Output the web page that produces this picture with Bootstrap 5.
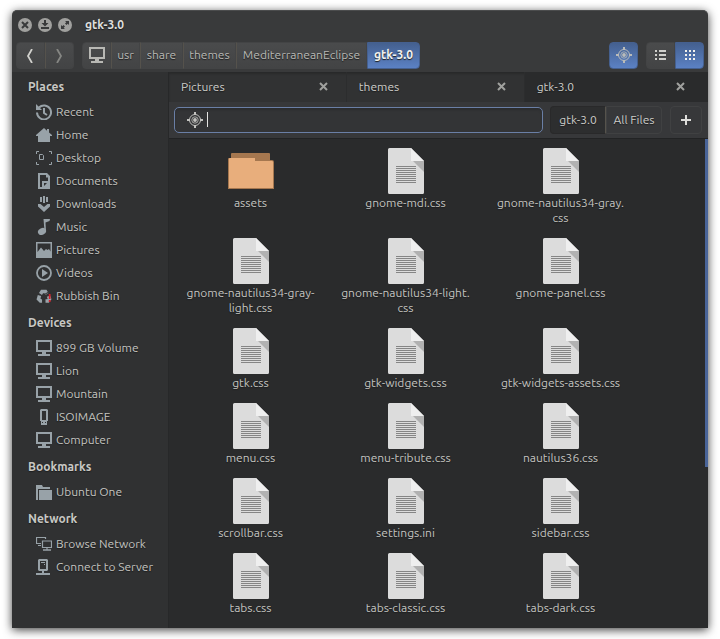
<!DOCTYPE html>
<html lang="en" data-bs-theme="dark">
<head>
<meta charset="utf-8">
<meta name="viewport" content="width=device-width, initial-scale=1">
<title>gtk-3.0</title>
<link href="https://cdn.jsdelivr.net/npm/bootstrap@5.3.0/dist/css/bootstrap.min.css" rel="stylesheet">
<style>
body{background:#fff;font-family:"Ubuntu","Noto Sans",sans-serif;font-size:12px;line-height:15px;color:#c4c4c0;padding:10px 12px 11px;text-shadow:0 1px 1px #1c1d1e}
a,a:hover{color:inherit;text-decoration:none}
button{font:inherit;color:inherit;text-shadow:inherit}
svg{display:block;flex:none}
.win{background:#393a3b;border-radius:5px 5px 0 0;box-shadow:0 2px 10px rgba(0,0,0,.75);min-height:calc(100vh - 21px);overflow:hidden;border-top:1px solid #4b4c4d}
.titlebar{height:27px;padding-left:6px;gap:6px}
.titlebar button{padding:0;border:0;background:none}
.titlebar h1{font-size:12px;font-weight:700;color:#dededc;margin:0 0 0 7px;line-height:16px}
.toolbar{height:34px;padding:4px}
.tool{height:27px;min-width:29px;padding:0 0 2px;border:1px solid #434445;border-left-color:#55524c;border-radius:0;background:linear-gradient(#4a4b4c,#434445);display:flex;align-items:center;justify-content:center;color:#b8b8b4}
.step{padding:0 2px 0 0}
.btn-set{display:flex}
.btn-set>:first-child{border-top-left-radius:4px;border-bottom-left-radius:4px;border-left-color:#434445}
.btn-set>:last-child{border-top-right-radius:4px;border-bottom-right-radius:4px}
.tool.picked{background:linear-gradient(#44608f,#5b81c4);border-color:#45608f;color:#f1f1ee}
.dim{color:#858683}
.side{width:157px;background:#303132;border-right:1px solid #272829}
.side h2{font-size:12px;font-weight:700;line-height:29px;margin:0;padding-left:16px;color:#c8c8c4}
.side a{height:23px;padding:0 0 2px 24px;gap:4px;display:flex;align-items:center}
.side svg{color:#98a2a8}
.main-pane{background:#2a2b2c;min-width:0}
.tabs-row{display:grid;grid-template-columns:33% 33% 1fr;background:#313233;height:30px;box-shadow:inset 0 2px 2px #292a2b}
.tab-cell{padding:0 18px 2px 12px;border-right:1px solid #2c2d2e;color:#cdcdc9}
.tab-cell.current{background:#2a2b2c;padding-right:23px;border:0}
.tab-cell button{background:none;border:0;padding:1px 0 0;color:#a0a19e}
.find{height:37px;background:#37383a;border-bottom:1px solid #222324;padding:0 6px 1px 5px}
.find-box input{width:100%;height:26px;border:1px solid #6a7fa6;border-radius:5px;background:#333436;color:inherit;padding:0 8px 0 34px;outline:0;display:block;box-shadow:inset 0 2px 2px #2c2d2f}
.find-box svg{position:absolute;left:13px;top:5px;color:#c2c2bf}
.caret{position:absolute;left:33px;top:5px;width:1px;height:15px;background:#e4e4e2}
.scopes{margin:0 8px 0 7px}
.scope{width:56px;height:28px;border:1px solid #404142;border-radius:0;background:#37383a;padding:0;color:#cdcdc9}
.scope.in{background:#2d2e2f;border-color:#29292a;border-right-color:#56534c}
.scope.plus{width:32px;border-radius:4px}
.files{position:relative}
.files ul{display:grid;grid-template-columns:repeat(auto-fill,155px);row-gap:13px;padding:9px 4px 13px 4px;margin:0;list-style:none}
.files a{display:flex;flex-direction:column;align-items:center;gap:1px;text-align:center}
.thumb{position:absolute;right:0;top:0;width:3px;height:67%;background:#4a6599}
.w-usr{width:29px}.w-share{width:43px}.w-themes{width:53px}.w-med{width:131px}.w-now{width:53px}
</style>
</head>
<body>
<svg width="0" height="0" class="position-absolute" aria-hidden="true">
<symbol id="pc" viewBox="0 0 16 16"><path fill="currentColor" fill-rule="evenodd" d="M0 0h16v12h-6v2h4v2H2v-2h4v-2H0zM2 2v8h12V2z"/></symbol>
<symbol id="target" viewBox="0 0 16 16"><g fill="none" stroke="currentColor"><circle cx="8" cy="8" r="5.5"/><circle cx="8" cy="8" r="3.2" stroke-width=".8"/><path stroke-width="2" d="M8 0v3M8 13v3M0 8h3M13 8h3"/></g><circle cx="8" cy="8" r="1.9" fill="currentColor"/></symbol>
<symbol id="x" viewBox="0 0 9 9"><path d="M1 1l7 7M8 1L1 8" stroke="currentColor" stroke-width="2"/></symbol>
<symbol id="doc" viewBox="0 0 36 46"><path fill="#dcdcdc" d="M1.500 0H23l13 13v31.500a1.500 1.500 0 0 1-1.500 1.500h-33A1.500 1.500 0 0 1 0 44.500v-43A1.500 1.500 0 0 1 1.500 0z"/><path fill="#b1b1b1" d="M25 13h11v11z"/><path fill="#efefef" d="M23 0l13 13H23z"/><path stroke="#858585" d="M8 18.500h20M8 20.500h20M8 22.500h20M8 24.500h20M8 26.500h20M8 28.500h20M8 30.500h20M8 32.500h20M8 34.500h20"/></symbol>
</svg>
<div class="win d-flex flex-column">
<header>
<div class="titlebar d-flex align-items-center">
<button type="button" aria-label="Close"><svg width="14" height="14" viewBox="0 0 14 14"><circle cx="7" cy="7" r="7" fill="#a0a09e"/><path d="M4 4l6 6M10 4l-6 6" stroke="#393a3b" stroke-width="2"/></svg></button>
<button type="button" aria-label="Minimise"><svg width="14" height="14" viewBox="0 0 14 14"><circle cx="7" cy="7" r="7" fill="#a0a09e"/><path fill="#393a3b" d="M6 2h2v3h2.500L7 8.500 3.500 5H6zM3 9h8v2H3z"/></svg></button>
<button type="button" aria-label="Maximise"><svg width="14" height="14" viewBox="0 0 14 14"><circle cx="7" cy="7" r="7" fill="#a0a09e"/><path fill="#393a3b" d="M7 3h4v4L9.700 5.700 8.500 7 7 5.500 8.300 4.300zM3 7l1.300 1.300L5.500 7 7 8.500 5.700 9.700 7 11H3z"/></svg></button>
<h1>gtk-3.0</h1>
</div>
<div class="toolbar d-flex">
<div class="btn-set me-2"><button class="tool step" type="button" aria-label="Back"><svg width="8" height="14" viewBox="0 0 8 14"><path d="M6 0L2 7l4 7" fill="none" stroke="#d0d0cc" stroke-width="1.800"/></svg></button><button class="tool step dim" type="button" aria-label="Forward"><svg width="8" height="14" viewBox="0 0 8 14"><path d="M2 0l4 7-4 7" fill="none" stroke="currentColor" stroke-width="1.800"/></svg></button></div>
<nav class="btn-set" aria-label="Path"><a href="#" class="tool" aria-label="Computer"><svg width="16" height="16"><use href="#pc"/></svg></a><a href="#" class="tool w-usr">usr</a><a href="#" class="tool w-share">share</a><a href="#" class="tool w-themes">themes</a><a href="#" class="tool w-med">MediterraneanEclipse</a><a href="#" class="tool picked w-now fw-bold">gtk-3.0</a></nav>
<div class="btn-set ms-auto me-2"><button class="tool picked" type="button" aria-label="Search"><svg width="16" height="16" color="#b9bbb9"><use href="#target"/></svg></button></div>
<div class="btn-set"><button class="tool" type="button" aria-label="List view"><svg width="11" height="10" viewBox="0 0 11 10"><path fill="#d0d0cc" d="M0 0h2v2H0zM4 0h7v2H4zM0 4h2v2H0zM4 4h7v2H4zM0 8h2v2H0zM4 8h7v2H4z"/></svg></button><button class="tool picked" type="button" aria-label="Icon view"><svg width="10" height="10" viewBox="0 0 10 10"><path fill="currentColor" d="M0 0h2v2H0zM4 0h2v2H4zM8 0h2v2H8zM0 4h2v2H0zM4 4h2v2H4zM8 4h2v2H8zM0 8h2v2H0zM4 8h2v2H4zM8 8h2v2H8z"/></svg></button></div>
</div>
</header>
<div class="d-flex flex-grow-1">
<aside class="side flex-shrink-0">
<h2>Places</h2>
<a href="#"><svg width="16" height="16" viewBox="0 0 16 16" fill="none" stroke="currentColor" stroke-width="2"><path d="M3 3.500A7 7 0 1 1 1 8.500"/><path d="M8 4v5l3 2"/><path d="M0 0l6 6H0z" fill="currentColor" stroke="none"/></svg>Recent</a>
<a href="#"><svg width="16" height="16" viewBox="0 0 16 16"><path fill="currentColor" d="M8 1l3 2.700V2h2v3.500L16 8v1h-2v6H2V9H0V8z"/></svg>Home</a>
<a href="#"><svg width="16" height="16" viewBox="0 0 16 16" fill="none" stroke="currentColor"><path d="M3 1.500H.5V4M13 1.500h2.500V4M.5 12v2.500H3M15.500 12v2.500H13M3.500 4.500h3l1 1v4h-4z"/></svg>Desktop</a>
<a href="#"><svg width="16" height="16" viewBox="0 0 16 16"><path fill="currentColor" fill-rule="evenodd" d="M2 0h9l3 3v13H2zM4 2v12h2V8h6V4.500h-2V2zM8 10v3l3-3z"/></svg>Documents</a>
<a href="#"><svg width="16" height="16" viewBox="0 0 16 16"><path fill="currentColor" d="M4 1h2v5H4zM7 0h2v7H7zM10 1h2v5h-2zM2 8h2.500L8 11l3.500-3H14v2.500L8 16l-6-5.500z"/></svg>Downloads</a>
<a href="#"><svg width="16" height="16" viewBox="0 0 16 16"><ellipse cx="6" cy="12.500" rx="4.200" ry="3.300" transform="rotate(-25 6 12.500)" fill="currentColor"/><path fill="currentColor" d="M7.500 0H14l-.5 2-4 1.500L10 12H8.500z"/></svg>Music</a>
<a href="#"><svg width="16" height="16" viewBox="0 0 16 16"><path fill="currentColor" fill-rule="evenodd" d="M0 0h16v16H0zM1.500 1.500V10L5 5.500 8 9l2-2 1.500 1L13 7l1.500 2.500v-8z"/></svg>Pictures</a>
<a href="#"><svg width="16" height="16" viewBox="0 0 16 16"><circle cx="8" cy="8" r="7" fill="none" stroke="currentColor" stroke-width="1.800"/><path fill="currentColor" d="M6 4l6 4-6 4z"/></svg>Videos</a>
<a href="#"><svg width="16" height="16" viewBox="0 0 16 16"><path fill="none" stroke="currentColor" stroke-width="3.500" d="M4.500 6L6 3.500h3.500L11 6M3.500 7.500L2.500 11l2 2H7M9.500 13H12l1.500-2-1-3" stroke-dasharray="8 1"/><path stroke="#d3202b" stroke-width="1.800" d="M13.700 6v5M13.700 12v2"/></svg>Rubbish Bin</a>
<h2>Devices</h2>
<a href="#"><svg width="16" height="16"><use href="#pc"/></svg>899 GB Volume</a>
<a href="#"><svg width="16" height="16"><use href="#pc"/></svg>Lion</a>
<a href="#"><svg width="16" height="16"><use href="#pc"/></svg>Mountain</a>
<a href="#"><svg width="16" height="16" viewBox="0 0 16 16"><path fill="currentColor" fill-rule="evenodd" d="M5 0h6l1 1v11h-1v4H5v-4H4V1zM6 2v9h4V2zM6 13v1h1v-1zM9 13v1h1v-1z"/></svg>ISOIMAGE</a>
<a href="#"><svg width="16" height="16"><use href="#pc"/></svg>Computer</a>
<h2>Bookmarks</h2>
<a href="#"><svg width="16" height="16" viewBox="0 0 16 16"><path fill="currentColor" d="M0 1h6l1 2h7v2H2v11H0zM3 6h13v10H3z"/></svg>Ubuntu One</a>
<h2>Network</h2>
<a href="#"><svg width="16" height="16" viewBox="0 0 16 16" fill="none" stroke="currentColor"><path d="M9.500 3V1.500h-9v6H5M2 9.500h3M6.500 5h9v6.500h-9zM11 12v2" stroke-width="1.200"/><path d="M7 14h8" stroke-width="1.500"/></svg>Browse Network</a>
<a href="#"><svg width="16" height="16" viewBox="0 0 16 16"><path fill="currentColor" fill-rule="evenodd" d="M3 0h8l1 1v10l-1 1H8v2h6v2H0v-2h6v-2H3l-1-1V1zM4 2v8h6V2zM5 3h4v1H5zM8 5h1v1H8z"/></svg>Connect to Server</a>
</aside>
<main class="main-pane flex-grow-1 d-flex flex-column">
<div class="tabs-row">
<div class="tab-cell d-flex align-items-center justify-content-between"><a href="#">Pictures</a><button type="button" aria-label="Close Pictures"><svg width="9" height="9"><use href="#x"/></svg></button></div>
<div class="tab-cell d-flex align-items-center justify-content-between"><a href="#">themes</a><button type="button" aria-label="Close themes"><svg width="9" height="9"><use href="#x"/></svg></button></div>
<div class="tab-cell current d-flex align-items-center justify-content-between"><a href="#">gtk-3.0</a><button type="button" aria-label="Close gtk-3.0"><svg width="9" height="9"><use href="#x"/></svg></button></div>
</div>
<form class="find d-flex align-items-center">
<div class="find-box position-relative flex-grow-1"><input type="text" aria-label="Search files"><svg width="16" height="16"><use href="#target"/></svg><span class="caret"></span></div>
<div class="btn-set scopes"><button type="button" class="scope in">gtk-3.0</button><button type="button" class="scope">All Files</button></div>
<button type="button" class="scope plus d-flex align-items-center justify-content-center" aria-label="Add filter"><svg width="10" height="10" viewBox="0 0 10 10"><path d="M5 0v10M0 5h10" stroke="#dededb" stroke-width="2"/></svg></button>
</form>
<div class="files flex-grow-1">
<ul>
<li><a href="#"><svg width="46" height="46" viewBox="0 0 46 46"><path fill="#a5774f" d="M4 5h37q1 0 1 1v6h2q2 0 2 2v27H0V11q0-1 1-1h2V6q0-1 1-1z"/><path fill="#e8ae7c" d="M1 11q0-1 1-1h25v3h17q1 0 1 1v26H1z"/></svg>assets</a></li>
<li><a href="#"><svg width="36" height="46"><use href="#doc"/></svg>gnome-mdi.css</a></li>
<li><a href="#"><svg width="36" height="46"><use href="#doc"/></svg><span>gnome-nautilus34-gray.<br>css</span></a></li>
<li><a href="#"><svg width="36" height="46"><use href="#doc"/></svg><span>gnome-nautilus34-gray-<br>light.css</span></a></li>
<li><a href="#"><svg width="36" height="46"><use href="#doc"/></svg><span>gnome-nautilus34-light.<br>css</span></a></li>
<li><a href="#"><svg width="36" height="46"><use href="#doc"/></svg>gnome-panel.css</a></li>
<li><a href="#"><svg width="36" height="46"><use href="#doc"/></svg>gtk.css</a></li>
<li><a href="#"><svg width="36" height="46"><use href="#doc"/></svg>gtk-widgets.css</a></li>
<li><a href="#"><svg width="36" height="46"><use href="#doc"/></svg>gtk-widgets-assets.css</a></li>
<li><a href="#"><svg width="36" height="46"><use href="#doc"/></svg>menu.css</a></li>
<li><a href="#"><svg width="36" height="46"><use href="#doc"/></svg>menu-tribute.css</a></li>
<li><a href="#"><svg width="36" height="46"><use href="#doc"/></svg>nautilus36.css</a></li>
<li><a href="#"><svg width="36" height="46"><use href="#doc"/></svg>scrollbar.css</a></li>
<li><a href="#"><svg width="36" height="46"><use href="#doc"/></svg>settings.ini</a></li>
<li><a href="#"><svg width="36" height="46"><use href="#doc"/></svg>sidebar.css</a></li>
<li><a href="#"><svg width="36" height="46"><use href="#doc"/></svg>tabs.css</a></li>
<li><a href="#"><svg width="36" height="46"><use href="#doc"/></svg>tabs-classic.css</a></li>
<li><a href="#"><svg width="36" height="46"><use href="#doc"/></svg>tabs-dark.css</a></li>
</ul>
<div class="thumb"></div>
</div>
</main>
</div>
</div>
<script src="https://cdn.jsdelivr.net/npm/bootstrap@5.3.0/dist/js/bootstrap.bundle.min.js"></script>
</body>
</html>
